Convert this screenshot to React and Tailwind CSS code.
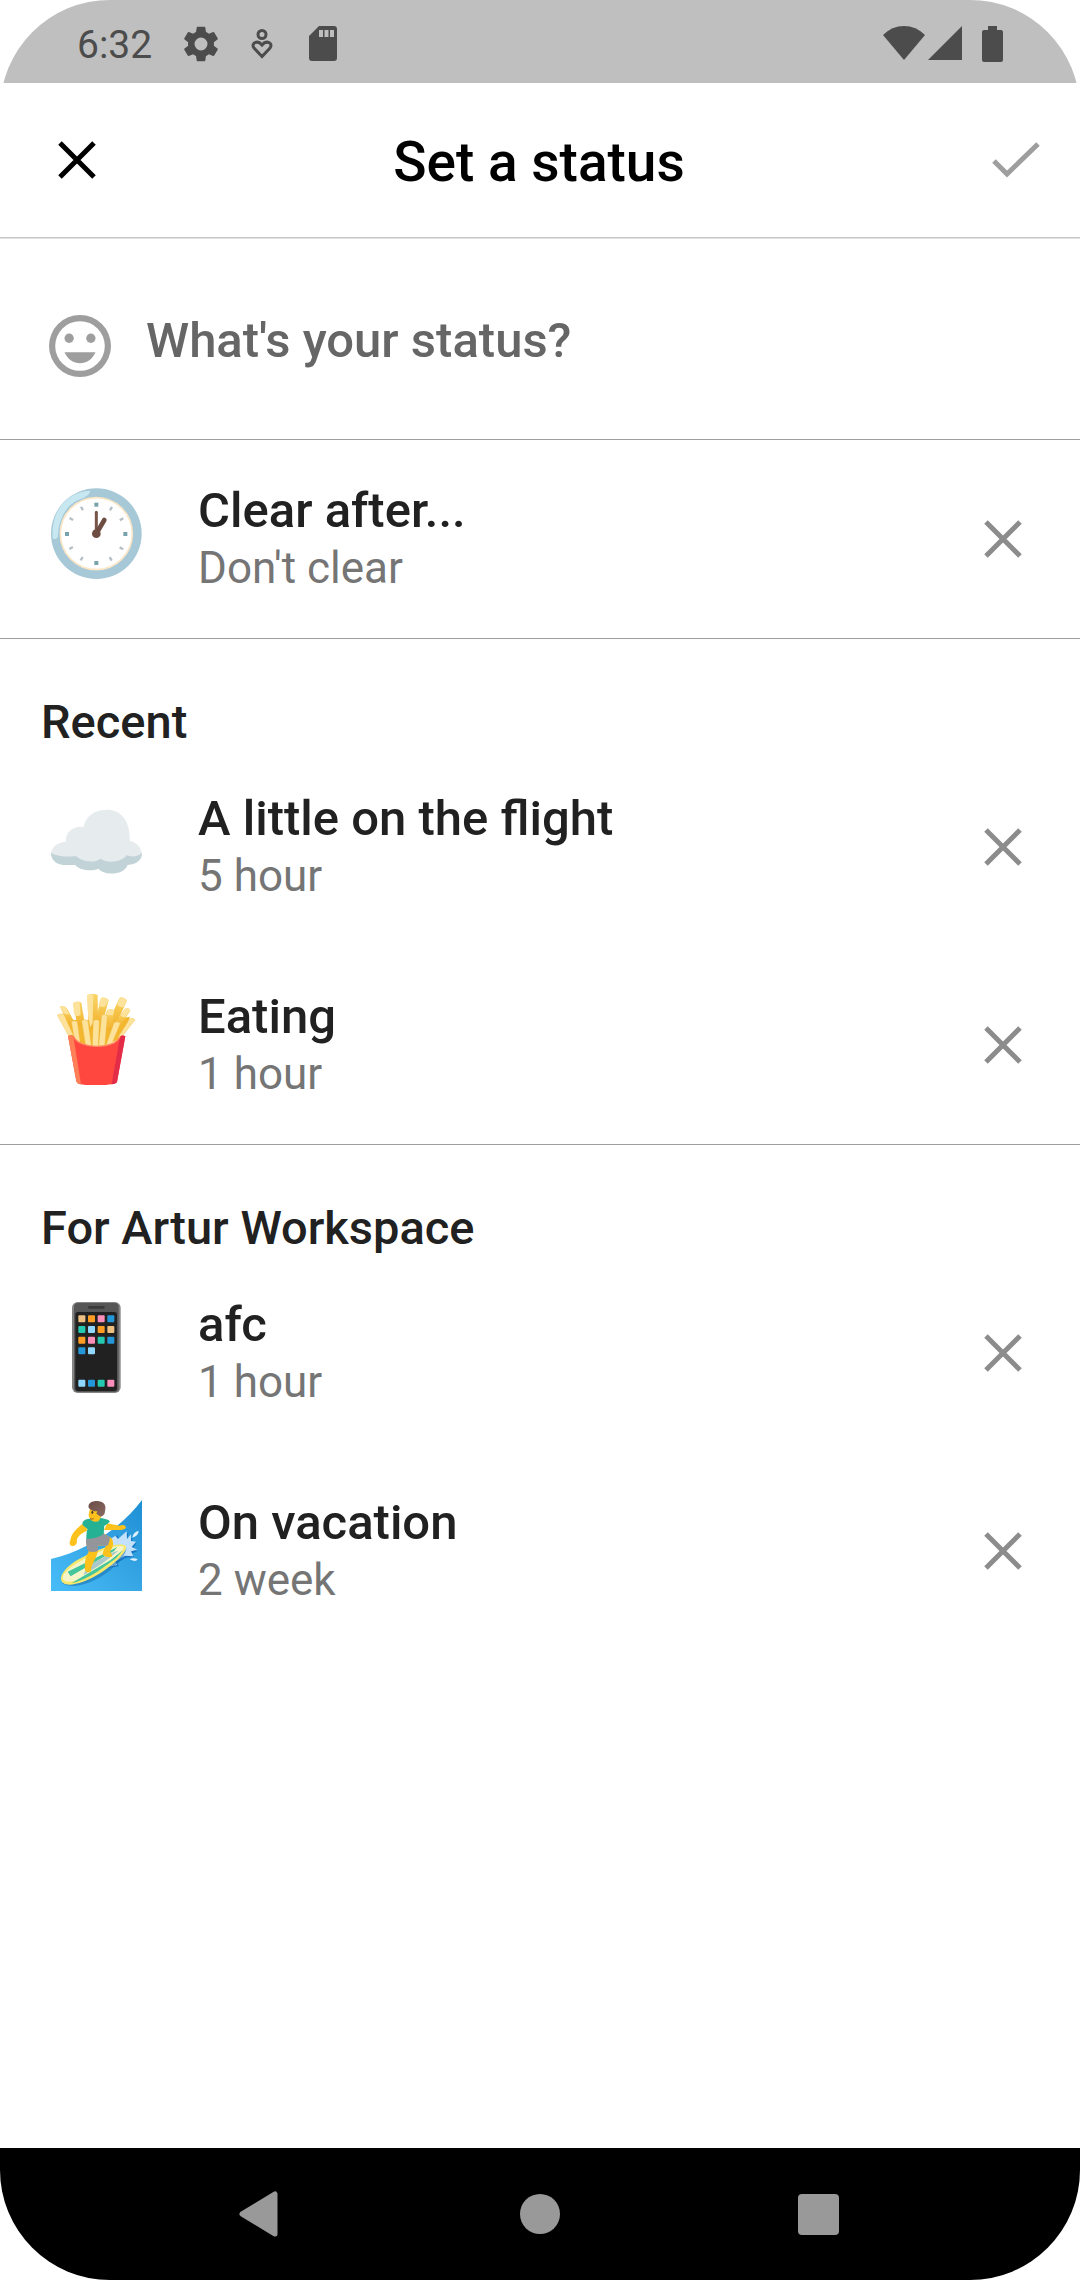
import React from "react";

function ClockEmoji() {
  const minor = [30, 60, 120, 150, 210, 240, 300, 330];
  return (
    <svg viewBox="63 54 273 273" className="size-[91px]" aria-hidden="true">
      <circle cx="199" cy="191" r="136" fill="#a6c8d7" />
      <path d="M181 62C178 76 165 82 150 88C105 105 86 150 84 200C80 209 70 208 68 205C62 130 105 65 181 62Z" fill="#c7e7f1" />
      <circle cx="199" cy="191" r="108" fill="#fff" stroke="#fbe6c6" strokeWidth="5" />
      <g fill="#78a3ad">
        <rect x="193" y="98" width="12" height="12" />
        <rect x="193" y="273" width="12" height="12" />
        <rect x="105" y="186" width="12" height="12" />
        <rect x="280" y="186" width="12" height="12" />
      </g>
      <g fill="#b3bfc5">
        {minor.map((a) => (
          <rect key={a} x="196" y="98" width="7" height="12" transform={`rotate(${a} 199 191)`} />
        ))}
      </g>
      <path d="M199 127V191" stroke="#795548" strokeWidth="9" strokeLinecap="round" />
      <path d="M223 150L199 191" stroke="#6d4c41" strokeWidth="14" strokeLinecap="round" />
      <circle cx="199" cy="191" r="13" fill="#6d4c41" />
    </svg>
  );
}

function CloudEmoji() {
  return (
    <svg viewBox="63 45 273 273" className="size-[91px]" aria-hidden="true">
      <path d="M63 215C63 240 82 252 108 252H136C148 268 185 272 205 263C222 284 282 284 293 252C318 251 336 238 336 217C330 205 290 190 200 195C120 190 70 200 63 215Z" fill="#c2d3d8" />
      <path d="M63 215C67 196 84 183 108 182C104 155 130 134 161 138C166 105 195 86 230 86C272 86 302 118 299 180C318 183 333 198 335 217C324 227 306 229 290 223C275 244 232 248 212 233C190 248 155 242 140 226C110 227 82 227 63 215Z" fill="#e6ebee" />
    </svg>
  );
}

function FriesEmoji() {
  const back = [
    "M90 110Q102 103 112 117L135 160L115 165Z",
    "M129 100Q142 90 154 98L165 165H142Z",
    "M172 76Q187 68 203 75L204 175H176Z",
    "M213 84Q225 80 236 90L215 170L195 160Z",
    "M270 82Q283 82 291 92L255 170L232 160Z",
    "M230 122Q243 114 253 122L245 180H222Z",
    "M285 116Q298 112 301 122L262 180L245 172Z",
  ];
  const front = [
    "M82 136Q92 127 102 134L130 196H115Z",
    "M124 155Q133 150 142 155L151 222L134 212Z",
    "M155 152Q166 145 174 153L184 228L167 228Z",
    "M190 152Q199 147 208 152L205 230H187Z",
    "M215 136Q224 130 232 138L224 228H206Z",
    "M252 158Q263 151 271 160L246 220L228 226Z",
    "M299 147Q311 142 315 150L278 197L262 205Z",
  ];
  return (
    <svg viewBox="63 72 273 273" className="size-[91px]" aria-hidden="true">
      <defs>
        <linearGradient id="potato" x1="0" y1="0" x2="0" y2="1">
          <stop offset="0" stopColor="#f9d566" />
          <stop offset="1" stopColor="#f2b12c" />
        </linearGradient>
      </defs>
      <path d="M98 145L120 208L200 236L275 205L300 140L245 150L190 150L135 150Z" fill="#f3b62f" />
      {back.map((d) => <path key={d} d={d} fill="url(#potato)" />)}
      <g fill="#fce29a">
        <path d="M90 110Q98 105 106 112L118 132Q104 136 99 126Z" />
        <path d="M129 100Q138 93 149 96L152 135Q138 142 132 132Z" />
        <path d="M172 76Q180 71 190 74L188 158L181 172L174 135Z" />
        <path d="M213 84Q225 82 236 90L225 110Q210 114 205 106Z" />
        <path d="M270 82Q283 82 291 92L281 112Q268 112 262 104Z" />
        <path d="M285 116Q298 112 301 122L285 142Q274 142 272 136Z" />
        <path d="M230 122Q243 114 253 122L248 136H231Z" />
      </g>
      {front.map((d) => <path key={d} d={d} fill="#fce29a" stroke="#f0b53a" strokeWidth="1" />)}
      <path d="M114 198Q124 194 132 200C145 237 252 240 270 200Q278 194 286 199L261 336Q258 341 245 343Q195 350 150 343Q141 341 139 334Z" fill="#ff473f" />
      <path d="M114 198Q124 194 130 198L153 343Q141 342 139 334Z" fill="#ff8056" />
      <path d="M270 200Q278 194 286 199L261 336Q258 341 245 343Z" fill="#e22c48" />
      <path d="M132 200C145 237 252 240 270 200" fill="none" stroke="#ff8a62" strokeWidth="4" />
    </svg>
  );
}

function PhoneEmoji() {
  const apps = [
    ["#edc082", "#ff9c23", "#fb8fba", "#2497d9"],
    ["#25c9b0", "#90d8fd", "#ff9c23", "#edc082"],
    ["#ff9c23", "#fb8fba", "#25c9b0", "#2497d9"],
    ["#2497d9", "#90d8fd"],
  ];
  const dock = ["#90d8fd", "#2497d9", "#25c9b0", "#fb8fba"];
  return (
    <svg viewBox="63 66 273 273" className="size-[91px]" aria-hidden="true">
      <rect x="126" y="66" width="146" height="273" rx="17" fill="#858585" />
      <rect x="132" y="69" width="134" height="267" rx="12" fill="#565656" />
      <rect x="136" y="96" width="125" height="237" rx="8" fill="#212121" />
      <rect x="174" y="78" width="50" height="8" rx="4" fill="#3a3a3a" />
      {apps.map((line, r) =>
        line.map((c, i) => (
          <rect key={`${r}-${i}`} x={145 + i * 29} y={106 + r * 32} width="21" height="21" rx="3" fill={c} />
        ))
      )}
      {dock.map((c, i) => <rect key={c} x={145 + i * 29} y="299" width="21" height="21" rx="3" fill={c} />)}
    </svg>
  );
}

function SurferEmoji() {
  return (
    <svg viewBox="63 63 273 273" className="size-[91px]" aria-hidden="true">
      <defs>
        <linearGradient id="sea" x1="1" y1="0" x2="0" y2="1">
          <stop offset="0" stopColor="#1e8fd5" />
          <stop offset="0.45" stopColor="#35a4e3" />
          <stop offset="1" stopColor="#47bdf8" />
        </linearGradient>
        <linearGradient id="hair" x1="0" y1="0" x2="1" y2="1">
          <stop offset="0" stopColor="#6a4b46" />
          <stop offset="1" stopColor="#8b6a63" />
        </linearGradient>
      </defs>
      <path d="M63 240C170 215 270 150 336 63V336H63Z" fill="url(#sea)" />
      <path d="M236 190L262 168L268 184L296 160L291 184L309 176L302 196L320 192L308 209L322 216L306 224L312 234L287 236L262 252L266 262L228 268Z" fill="#1677c4" />
      <path d="M230 188L256 170L264 180L290 157L291 180L303 166L303 186L318 188L305 204L322 212L303 217L310 232L285 230L256 248L262 258L225 266Z" fill="#c3e1fb" />
      <path d="M307 176Q309 160 326 155Q326 170 307 176ZM299 241Q310 235 323 241Q318 251 299 241Z" fill="#e0f1fe" />
      <path d="M96 312C120 329 165 322 215 292C255 267 284 235 290 208L280 222L180 290Z" fill="#176fae" opacity="0.55" />
      <path d="M93 301C92 278 125 249 165 231C215 205 273 188 287 201C297 213 250 260 205 286C157 315 98 331 93 301Z" fill="#f7e86b" />
      <path d="M98 296C103 272 150 246 180 232C225 210 270 195 282 204C280 220 230 257 195 278C155 303 102 321 98 296Z" fill="#f5f5c9" />
      <path d="M113 278L246 212L262 204L252 216L122 292ZM125 312L241 244L278 214L259 237L202 278Q155 307 125 312Z" fill="#43c69c" />
      <path d="M172 262L252 218L265 216L215 255L160 289Z" fill="#a9c9cc" />
      <path d="M161 132C145 145 124 160 121 184C116 194 120 202 130 201C137 199 143 193 140 185C143 170 158 161 173 154Z" fill="#fcc21b" />
      <path d="M232 133L268 140Q285 135 288 145Q286 153 270 153L222 153Z" fill="#fcc21b" />
      <path d="M172 180C167 200 173 207 176 219C164 236 164 260 165 272C166 281 177 281 183 277C183 254 199 240 204 216L203 200L228 199C225 210 216 219 219 229Q229 236 244 234Q250 228 240 219C252 198 252 187 243 176L220 163Z" fill="#fcc21b" />
      <path d="M169 178L218 162L239 173Q241 185 233 200L204 199L204 216Q189 222 175 217C170 202 166 193 169 178Z" fill="#93959a" />
      <path d="M158 129Q168 117 188 120L211 117Q231 119 240 127Q232 138 223 140L221 165Q201 179 169 180Q169 157 173 151L157 137Z" fill="#25b193" />
      <path d="M181 85C177 101 173 112 180 118C183 129 205 134 210 119L219 101L207 84Z" fill="#fcc21b" />
      <path d="M176 86C172 69 195 64 207 67C225 69 229 83 225 96C225 107 216 115 210 112L199 104L202 97Q184 97 176 86Z" fill="url(#hair)" />
      <ellipse cx="187" cy="100" rx="3" ry="5" fill="#513b36" />
      <path d="M180 119Q186 122 191 119" fill="none" stroke="#9b5928" strokeWidth="3" />
    </svg>
  );
}

function Cross() {
  return (
    <svg viewBox="0 0 38 38" className="size-[38px]" aria-hidden="true">
      <path d="M2 2L36 36M36 2L2 36" stroke="currentColor" strokeWidth="5" />
    </svg>
  );
}

function StatusRow({ icon, title, detail }) {
  return (
    <li className="flex h-[198px] items-center pr-[48px]">
      <button type="button" className="flex h-full min-w-0 flex-1 items-center pl-[51px] text-left">
        <span className="self-start pt-[48px]">{icon}</span>
        <span className="flex min-w-0 flex-col pl-[56px]">
          <span className="truncate text-[49px] leading-[58px] font-medium text-[#212121]">{title}</span>
          <span className="truncate text-[44px] leading-[56px] text-[#757575]">{detail}</span>
        </span>
      </button>
      <button type="button" aria-label={`Clear ${title}`} className="flex size-[58px] items-center justify-center text-[#8c8c8c]">
        <Cross />
      </button>
    </li>
  );
}

function Section({ title, children }) {
  return (
    <section className="border-b border-[#9e9e9e] last:border-b-0">
      {title && (
        <h2 className="px-[41px] pt-[56px] text-[47px] leading-[53px] font-medium text-[#212121]">{title}</h2>
      )}
      <ul>{children}</ul>
    </section>
  );
}

function SystemBar() {
  return (
    <div className="flex h-[83px] items-center justify-between bg-[#bfbfbf] pt-[4px] pr-[73px] pl-[77px] text-[#4c4c4c]">
      <div className="flex items-center">
        <time className="pt-[2px] text-[39px] leading-[46px]">6:32</time>
        <svg viewBox="2 2 20 20" className="ml-[31px] size-[36px]" fill="currentColor" aria-hidden="true">
          <path d="M19.14 12.94c.04-.3.06-.61.06-.94 0-.32-.02-.64-.07-.94l2.03-1.58a.49.49 0 0 0 .12-.61l-1.92-3.32a.488.488 0 0 0-.59-.22l-2.39.96c-.5-.38-1.03-.7-1.62-.94l-.36-2.54a.484.484 0 0 0-.48-.41h-3.84c-.24 0-.43.17-.47.41l-.36 2.54c-.59.24-1.13.57-1.62.94l-2.39-.96a.49.49 0 0 0-.59.22L2.74 8.87c-.12.21-.08.47.12.61l2.03 1.58c-.05.3-.09.63-.09.94s.02.64.07.94l-2.03 1.58a.49.49 0 0 0-.12.61l1.92 3.32c.12.22.37.29.59.22l2.39-.96c.5.38 1.03.7 1.62.94l.36 2.54c.05.24.24.41.48.41h3.84c.24 0 .44-.17.47-.41l.36-2.54c.59-.24 1.13-.56 1.62-.94l2.39.96c.22.08.47 0 .59-.22l1.92-3.32a.49.49 0 0 0-.12-.61l-2.01-1.58zM12 15.6A3.6 3.6 0 1 1 12 8.4a3.6 3.6 0 0 1 0 7.2z" />
        </svg>
        <svg viewBox="0 0 22 30" className="ml-[32px] h-[30px] w-[22px]" fill="none" stroke="currentColor" strokeWidth="3" aria-hidden="true">
          <circle cx="11" cy="5.500" r="4" />
          <path d="M11 27.500L3 19C-.5 14 6.500 10.500 11 16C15.500 10.500 22.500 14 19 19Z" />
        </svg>
        <svg viewBox="0 0 28 35" className="ml-[36px] h-[35px] w-[28px]" fill="currentColor" fillRule="evenodd" aria-hidden="true">
          <path d="M10 0H25Q28 0 28 3V32Q28 35 25 35H3Q0 35 0 32V10ZM10 4V11H14V4ZM15.500 4V11H19.500V4ZM21 4V11H25V4Z" />
        </svg>
      </div>
      <div className="flex items-center">
        <svg viewBox="0 0 42 35" className="h-[35px] w-[42px]" fill="currentColor" aria-hidden="true">
          <path d="M0 9Q9 0 21 0T42 9L21 34Z" />
        </svg>
        <svg viewBox="0 0 34 35" className="ml-[3px] h-[35px] w-[34px]" fill="currentColor" aria-hidden="true">
          <path d="M34 0V34H0Z" />
        </svg>
        <svg viewBox="0 0 28 36" className="ml-[17px] h-[36px] w-[28px]" fill="currentColor" aria-hidden="true">
          <path d="M9 0H18V4H22Q24 4 24 6V34Q24 36 22 36H5Q3 36 3 34V6Q3 4 5 4H9Z" />
        </svg>
      </div>
    </div>
  );
}

export default function App() {
  return (
    <div className="flex min-h-screen flex-col overflow-hidden rounded-[110px] bg-white font-['Roboto',sans-serif]">
      <SystemBar />
      <header className="grid h-[155px] grid-cols-[1fr_auto_1fr] items-center border-b border-[#c4c4c4] pr-[38px] pl-[48px] shadow-[0_1px_0_#e4e4e4]">
        <button type="button" aria-label="Close" className="flex size-[58px] items-center justify-center text-black">
          <Cross />
        </button>
        <h1 className="pt-[3px] pr-[12px] text-[55px] leading-[64px] font-medium text-black">Set a status</h1>
        <button type="button" aria-label="Save" className="flex h-[58px] w-[52px] items-center justify-center justify-self-end text-[#9e9e9e]">
          <svg viewBox="0 0 48 36" className="h-[36px] w-[48px]" aria-hidden="true">
            <path d="M2 19L15 32L46 2" fill="none" stroke="currentColor" strokeWidth="5" />
          </svg>
        </button>
      </header>
      <main className="flex-1">
        <form className="flex h-[202px] items-center border-b border-[#9e9e9e] px-[44px]" onSubmit={(e) => e.preventDefault()}>
          <button type="button" aria-label="Choose emoji" className="flex size-[72px] items-center justify-center pt-[14px] text-[#9e9e9e]">
            <svg viewBox="2 2 20 20" className="size-[62px] shrink-0" fill="currentColor" aria-hidden="true">
              <path fillRule="evenodd" d="M12 2a10 10 0 1 0 0 20 10 10 0 0 0 0-20zm0 18a8 8 0 1 1 0-16 8 8 0 0 1 0 16z" />
              <circle cx="8.500" cy="9.500" r="1.500" />
              <circle cx="15.500" cy="9.500" r="1.500" />
              <path d="M7 14C9 18.700 15 18.700 17 14Z" />
            </svg>
          </button>
          <input
            type="text"
            aria-label="Status"
            placeholder="What's your status?"
            className="ml-[30px] h-[68px] min-w-0 flex-1 bg-transparent pt-[4px] text-[49px] font-medium text-[#212121] outline-none placeholder:text-[#666666]"
          />
        </form>
        <Section>
          <StatusRow icon={<ClockEmoji />} title="Clear after..." detail="Don't clear" />
        </Section>
        <Section title="Recent">
          <StatusRow icon={<CloudEmoji />} title="A little on the flight" detail="5 hour" />
          <StatusRow icon={<FriesEmoji />} title="Eating" detail="1 hour" />
        </Section>
        <Section title="For Artur Workspace">
          <StatusRow icon={<PhoneEmoji />} title="afc" detail="1 hour" />
          <StatusRow icon={<SurferEmoji />} title="On vacation" detail="2 week" />
        </Section>
      </main>
      <nav className="flex h-[132px] items-center justify-around bg-black px-[123px] text-[#999999]">
        <button type="button" aria-label="Back" className="flex size-[80px] items-center justify-center">
          <svg viewBox="0 0 46 46" className="size-[46px]" aria-hidden="true">
            <path d="M3 23L36 3V43Z" fill="currentColor" stroke="currentColor" strokeWidth="5" strokeLinejoin="round" />
          </svg>
        </button>
        <button type="button" aria-label="Home" className="flex size-[80px] items-center justify-center">
          <span className="size-[40px] rounded-full bg-[#999999]" />
        </button>
        <button type="button" aria-label="Overview" className="flex size-[80px] items-center justify-center">
          <span className="size-[41px] rounded-[4px] bg-[#999999]" />
        </button>
      </nav>
    </div>
  );
}
